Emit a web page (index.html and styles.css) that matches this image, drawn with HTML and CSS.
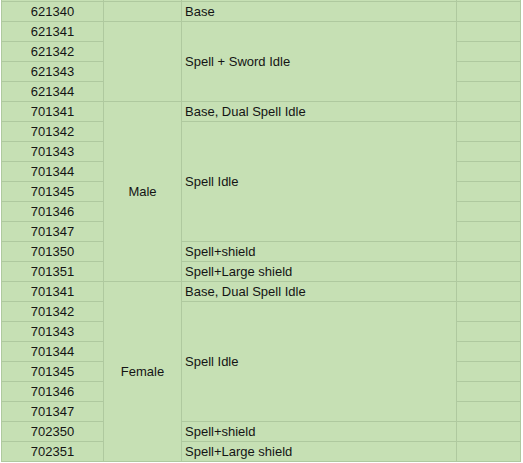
FILE: index.html
```html
<!DOCTYPE html>
<html>
<head>
<meta charset="utf-8">
<link rel="stylesheet" href="styles.css">
</head>
<body>
<div class="sheet">
  <!-- partial row cut off at the top -->
  <div class="cell"></div><div class="cell"></div><div class="cell"></div><div class="cell"></div>

  <div class="cell num">621340</div>
  <div class="cell"></div>
  <div class="cell txt">Base</div>
  <div class="cell"></div>

  <div class="cell num">621341</div>
  <div class="cell c2 span4"></div>
  <div class="cell txt c3 span4">Spell + Sword Idle</div>
  <div class="cell"></div>
  <div class="cell num">621342</div><div class="cell"></div>
  <div class="cell num">621343</div><div class="cell"></div>
  <div class="cell num">621344</div><div class="cell"></div>

  <div class="cell num">701341</div>
  <div class="cell c2 span9 mid">Male</div>
  <div class="cell txt">Base, Dual Spell Idle</div>
  <div class="cell"></div>
  <div class="cell num">701342</div>
  <div class="cell txt c3 span6">Spell Idle</div>
  <div class="cell"></div>
  <div class="cell num">701343</div><div class="cell"></div>
  <div class="cell num">701344</div><div class="cell"></div>
  <div class="cell num">701345</div><div class="cell"></div>
  <div class="cell num">701346</div><div class="cell"></div>
  <div class="cell num">701347</div><div class="cell"></div>
  <div class="cell num">701350</div>
  <div class="cell txt">Spell+shield</div>
  <div class="cell"></div>
  <div class="cell num">701351</div>
  <div class="cell txt">Spell+Large shield</div>
  <div class="cell"></div>

  <div class="cell num">701341</div>
  <div class="cell c2 span9 mid">Female</div>
  <div class="cell txt">Base, Dual Spell Idle</div>
  <div class="cell"></div>
  <div class="cell num">701342</div>
  <div class="cell txt c3 span6">Spell Idle</div>
  <div class="cell"></div>
  <div class="cell num">701343</div><div class="cell"></div>
  <div class="cell num">701344</div><div class="cell"></div>
  <div class="cell num">701345</div><div class="cell"></div>
  <div class="cell num">701346</div><div class="cell"></div>
  <div class="cell num">701347</div><div class="cell"></div>
  <div class="cell num">702350</div>
  <div class="cell txt">Spell+shield</div>
  <div class="cell"></div>
  <div class="cell num">702351</div>
  <div class="cell txt">Spell+Large shield</div>
  <div class="cell"></div>
</div>
</body>
</html>
```

FILE: styles.css
```css
html, body {
  margin: 0;
  padding: 0;
  background: #ffffff;
}

body {
  font-family: "Liberation Sans", Arial, sans-serif;
  font-size: 13px;
  color: #141414;
}

.sheet {
  margin-left: 1px;
  width: 518px;
  display: grid;
  grid-template-columns: 101px 77px 274px 63px;
  grid-template-rows: 1px repeat(23, 19px);
  gap: 1px;
  padding: 0 1px 1px 1px;
  background: #afc99f;
}

.cell {
  background: #c6e0b4;
  display: flex;
  align-items: center;
  min-width: 0;
  overflow: hidden;
  white-space: nowrap;
  line-height: 19px;
}

.num {
  justify-content: center;
}

.txt {
  padding-left: 3px;
}

.mid {
  justify-content: center;
}

.c2 { grid-column: 2; }
.c3 { grid-column: 3; }

.span4 { grid-row: span 4; }
.span6 { grid-row: span 6; }
.span9 { grid-row: span 9; }
```
